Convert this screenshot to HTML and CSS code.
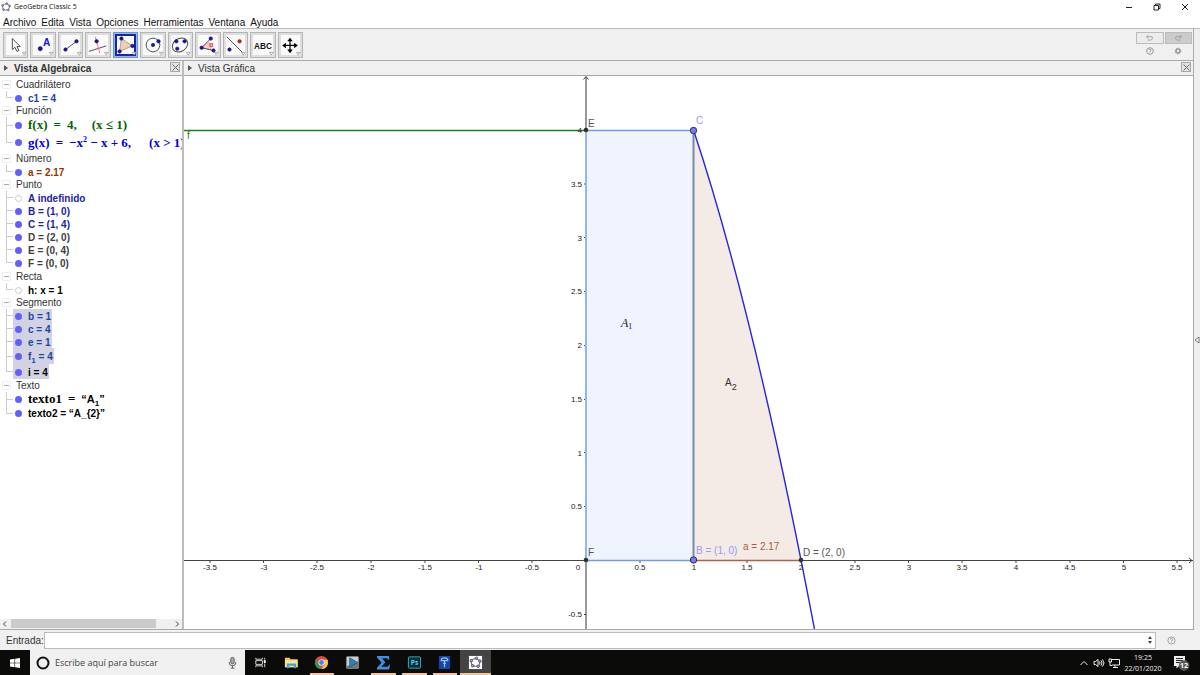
FILE: index.html
```html
<!DOCTYPE html>
<html lang="es">
<head>
<meta charset="utf-8">
<title>GeoGebra Classic 5</title>
<link rel="stylesheet" href="styles.css">
</head>
<body>
<header class="titlebar">
  <svg class="app-logo" viewBox="0 0 12 12"><ellipse cx="6" cy="6" rx="4.2" ry="3.8" fill="none" stroke="#666" stroke-width="1"/><g fill="#99f" stroke="#444" stroke-width=".6"><circle cx="6.8" cy="1.8" r="1.1"/><circle cx="10.4" cy="4.6" r="1.1"/><circle cx="8.8" cy="9.6" r="1.1"/><circle cx="3" cy="9.2" r="1.1"/><circle cx="1.8" cy="4.2" r="1.1"/></g></svg>
  <h1 class="app-title">GeoGebra Classic 5</h1>
  <div class="window-buttons">
    <button aria-label="Minimizar"><svg viewBox="0 0 10 10"><path d="M2 5.500h6"/></svg></button>
    <button aria-label="Restaurar"><svg viewBox="0 0 10 10"><path d="M2 3.5h4.5V8H2zM3.5 3.500V2H8v4.500H6.500"/></svg></button>
    <button aria-label="Cerrar"><svg viewBox="0 0 10 10"><path d="M2 2l6 6M8 2L2 8"/></svg></button>
  </div>
</header>
<nav class="menubar">
  <button>Archivo</button><button>Edita</button><button>Vista</button><button>Opciones</button><button>Herramientas</button><button>Ventana</button><button>Ayuda</button>
</nav>
<div class="workspace">
<div class="app">
  <div class="toolbar">
    <div class="tools">
      <button class="tool" aria-label="Elige y mueve"><svg viewBox="0 0 24 24"><path class="thin" fill="#fff" d="M8 5v12l2.800-2.500 2.200 4.500 2.200-1-2.200-4.300h3.700z"/><path class="more" d="M19 20h4l-2 3z"/></svg></button>
      <button class="tool" aria-label="Punto"><svg viewBox="0 0 24 24"><circle class="pt" cx="9" cy="16" r="2.300"/><text class="pt-name" x="12" y="13">A</text><path class="more" d="M19 20h4l-2 3z"/></svg></button>
      <button class="tool" aria-label="Segmento"><svg viewBox="0 0 24 24"><path class="thin" d="M6 17L18 8"/><circle class="pt" cx="6" cy="17" r="1.900"/><circle class="pt" cx="18" cy="8" r="1.900"/><path class="more" d="M19 20h4l-2 3z"/></svg></button>
      <button class="tool" aria-label="Perpendicular"><svg viewBox="0 0 24 24"><path class="thin" d="M2 19l19-6"/><path stroke="#f66" fill="none" d="M9 3l5 18"/><circle class="pt" cx="10.500" cy="8" r="1.900"/><path class="more" d="M19 20h4l-2 3z"/></svg></button>
      <button class="tool active" aria-label="Polígono"><svg viewBox="0 0 24 24"><path fill="#eccdb6" stroke="#a88872" stroke-width=".8" d="M7 5L19 13 5 19z"/><circle class="pt" cx="7" cy="5" r="1.900"/><circle class="pt" cx="19" cy="13" r="1.900"/><circle class="pt" cx="5" cy="19" r="1.900"/><path class="more" d="M19 20h4l-2 3z"/></svg></button>
      <button class="tool" aria-label="Circunferencia"><svg viewBox="0 0 24 24"><circle class="thin" cx="12" cy="12" r="7.500"/><circle class="pt" cx="12" cy="12" r="1.900"/><circle class="pt" cx="18" cy="8" r="1.900"/><path class="more" d="M19 20h4l-2 3z"/></svg></button>
      <button class="tool" aria-label="Elipse"><svg viewBox="0 0 24 24"><ellipse class="thin" cx="12" cy="12" rx="9" ry="7" transform="rotate(-35 12 12)"/><circle class="pt" cx="8" cy="8" r="1.900"/><circle class="pt" cx="17" cy="8" r="1.900"/><circle class="pt" cx="9" cy="16" r="1.900"/><path class="more" d="M19 20h4l-2 3z"/></svg></button>
      <button class="tool" aria-label="Ángulo"><svg viewBox="0 0 24 24"><path fill="#fcc" stroke="#f88" stroke-width=".8" d="M5 15l8-6q4 4 2 8z"/><path class="thin" d="M15 5L5 15l13 3"/><text class="alpha" x="13" y="14">α</text><circle class="pt" cx="15" cy="5" r="1.900"/><circle class="pt" cx="5" cy="15" r="1.900"/><circle class="pt" cx="18" cy="18" r="1.900"/><path class="more" d="M19 20h4l-2 3z"/></svg></button>
      <button class="tool" aria-label="Simetría"><svg viewBox="0 0 24 24"><path class="thin" d="M3 3l18 18"/><circle class="pt" cx="6" cy="17" r="1.900"/><circle class="pt-red" cx="17" cy="8" r="1.900"/><path class="more" d="M19 20h4l-2 3z"/></svg></button>
      <button class="tool" aria-label="Texto"><svg viewBox="0 0 24 24"><text class="abc" x="12" y="16" text-anchor="middle">ABC</text><path class="more" d="M19 20h4l-2 3z"/></svg></button>
      <button class="tool" aria-label="Desplaza vista gráfica"><svg viewBox="0 0 24 24"><path stroke="#000" stroke-width="1.300" d="M12 6v13M6 12.500h13"/><path d="M12 4l3 4H9zM12 21l3-4H9zM3.500 12.500l4-3v6zM20.500 12.500l-4-3v6z"/><path class="more" d="M19 20h4l-2 3z"/></svg></button>
    </div>
    <div class="history">
      <button class="undo" aria-label="Deshace"><svg viewBox="0 0 12 10"><path d="M4 1.500L2 3.500l2 2M2 3.500h6.500q1.500 2-1 4H3"/></svg></button>
      <button class="undo redo" aria-label="Rehace"><svg viewBox="0 0 12 10"><path d="M8 1.500l2 2-2 2M10 3.500H3.500q-1.500 2 1 4H9"/></svg></button>
      <button aria-label="Ayuda"><svg viewBox="0 0 10 10"><circle cx="5" cy="5" r="3.300"/><path d="M4 4q0-1 1-1t1 1-1 1v1M5 7v.5"/></svg></button>
      <button aria-label="Ajustes"><svg viewBox="0 0 10 10"><circle cx="5" cy="5" r="2" stroke-width="1.600"/><circle cx="5" cy="5" r="3" stroke-dasharray="1 1.350"/></svg></button>
    </div>
  </div>
  <div class="views">
    <section class="algebra">
      <div class="view-head"><svg class="caret" viewBox="0 0 6 8"><path d="M1 1l4 3-4 3z"/></svg><h2>Vista Algebraica</h2><button class="close" aria-label="Cerrar vista"><svg viewBox="0 0 9 9"><path d="M1.500 1.500l6 6M7.500 1.500l-6 6"/></svg></button></div>
      <div class="tree">
        <h3><button aria-label="Contraer"></button>Cuadrilátero</h3>
        <ul><li class="blue"><div><i class="dot"></i>c1 = 4</div></li></ul>
        <h3><button aria-label="Contraer"></button>Función</h3>
        <ul>
          <li class="green math f-row"><div><i class="dot"></i><span>f(x)</span><span>=</span><span>4,</span><span class="domain">(x ≤ 1)</span></div></li>
          <li class="pure math g-row"><div><i class="dot"></i><span>g(x)</span><span>=</span><span>−x<sup>2</sup> − x + 6,</span><span class="domain">(x &gt; 1)</span></div></li>
        </ul>
        <h3><button aria-label="Contraer"></button>Número</h3>
        <ul><li class="brown"><div><i class="dot"></i>a = 2.17</div></li></ul>
        <h3><button aria-label="Contraer"></button>Punto</h3>
        <ul class="points">
          <li class="navy"><div><i class="dot off"></i>A indefinido</div></li>
          <li class="navy"><div><i class="dot"></i>B = (1, 0)</div></li>
          <li class="navy"><div><i class="dot"></i>C = (1, 4)</div></li>
          <li class="gray"><div><i class="dot"></i>D = (2, 0)</div></li>
          <li class="gray"><div><i class="dot"></i>E = (0, 4)</div></li>
          <li class="gray"><div><i class="dot"></i>F = (0, 0)</div></li>
        </ul>
        <h3><button aria-label="Contraer"></button>Recta</h3>
        <ul><li><div><i class="dot off"></i>h: x = 1</div></li></ul>
        <h3><button aria-label="Contraer"></button>Segmento</h3>
        <ul class="selected">
          <li class="blue"><div><i class="dot"></i>b = 1</div></li>
          <li class="blue"><div><i class="dot"></i>c = 4</div></li>
          <li class="blue"><div><i class="dot"></i>e = 1</div></li>
          <li class="blue sub-row"><div><i class="dot"></i><span>f<sub>1</sub> = 4</span></div></li>
          <li class="i-row"><div><i class="dot"></i>i = 4</div></li>
        </ul>
        <h3><button aria-label="Contraer"></button>Texto</h3>
        <ul class="texts">
          <li class="math"><div><i class="dot"></i><span>texto1</span><span>=</span><span class="quoted">“A<sub>1</sub>”</span></div></li>
          <li><div><i class="dot"></i>texto2 = “A_{2}”</div></li>
        </ul>
      </div>
      <div class="scrollbar"><svg viewBox="0 0 10 10"><path d="M6 2.500L3.500 5 6 7.500"/></svg><div class="track"><div class="thumb"></div></div><svg viewBox="0 0 10 10"><path d="M4 2.500L6.500 5 4 7.500"/></svg></div>
    </section>
    <section class="graphics">
      <div class="view-head"><svg class="caret" viewBox="0 0 6 8"><path d="M1 1l4 3-4 3z"/></svg><h2>Vista Gráfica</h2><button class="close" aria-label="Cerrar vista"><svg viewBox="0 0 9 9"><path d="M1.500 1.500l6 6M7.500 1.500l-6 6"/></svg></button></div>
      <div class="plot">
      <svg width="100%" height="100%">
        <rect x="402" y="54" width="107.500" height="430" fill="#eff4ff"/>
        <path fill="#f4eae6" d="M509.500 484V54Q563.250 215.250 617 484z"/>
        <g class="axes">
          <line x1="0" y1="484.500" x2="100%" y2="484.500"/>
          <line x1="402" y1="1" x2="402" y2="100%" stroke="#777" stroke-width="1.500"/>
          <path d="M399.500 3.500L402 .5l2.500 3"/>
          <path d="M26 484v3M79.500 484v3M133 484v3M187 484v3M241 484v3M294.500 484v3M348 484v3M456 484v3M509.500 484v3M563 484v3M617 484v3M671 484v3M724.500 484v3M778 484v3M832 484v3M886 484v3M939.500 484v3M993 484v3M400 108h2M400 161.500h2M400 215.500h2M400 269.500h2M400 323.500h2M400 376.500h2M400 430.500h2M400 538.500h2"/>
          <svg x="100%" y="480" overflow="visible"><path d="M-4 2l3 2.500-3 2.500"/></svg>
        </g>
        <path stroke="#1c821c" stroke-width="1.500" d="M0 54.500h402"/>
        <g stroke="#8fb7f3" stroke-width="2"><path d="M402 54v430"/><path stroke="#6f9ce4" stroke-width="1.500" d="M402 54.500h107.500M402 484.500h107.500"/></g>
        <path stroke="#7589aa" stroke-width="2" d="M509.500 54v430"/>
        <path stroke="#af6149" stroke-width="1.500" d="M509.500 484.500H617"/>
        <path stroke="#2626dd" stroke-width="1.400" fill="none" d="M509.500 54Q574 247.500 638.500 595.800"/>
        <g class="ticks" text-anchor="middle">
          <text x="26" y="494">-3.5</text><text x="80" y="494">-3</text><text x="133" y="494">-2.5</text><text x="187" y="494">-2</text><text x="241" y="494">-1.5</text><text x="295" y="494">-1</text><text x="348" y="494">-0.5</text><text x="394" y="494">0</text><text x="456" y="494">0.5</text><text x="510" y="494">1</text><text x="563" y="494">1.5</text><text x="617" y="494">2</text><text x="671" y="494">2.5</text><text x="725" y="494">3</text><text x="778" y="494">3.5</text><text x="832" y="494">4</text><text x="886" y="494">4.5</text><text x="940" y="494">5</text><text x="993" y="494">5.5</text>
        </g>
        <g class="ticks" text-anchor="end">
          <text x="398" y="57">4</text><text x="398" y="111">3.5</text><text x="398" y="165">3</text><text x="398" y="218">2.5</text><text x="398" y="272">2</text><text x="398" y="326">1.5</text><text x="398" y="380">1</text><text x="398" y="433">0.5</text><text x="398" y="541">-0.5</text>
        </g>
        <g fill="#333"><circle cx="402" cy="54" r="2.300"/><circle cx="402" cy="484" r="2.300"/><circle cx="617" cy="484" r="2.300"/></g>
        <g fill="#7777ff" stroke="#333" stroke-width="1"><circle cx="509.500" cy="54.500" r="3.200"/><circle cx="509.500" cy="484" r="3.200"/></g>
        <g class="names">
          <text x="3" y="63" fill="#1c821c">f</text>
          <text x="404" y="51">E</text><text x="404" y="480">F</text>
          <text x="512" y="48" fill="#9999f8">C</text>
          <text x="512" y="478" fill="#9999f8">B = (1, 0)</text>
          <text x="559" y="474" fill="#b2593a">a = 2.17</text>
          <text x="619" y="480">D = (2, 0)</text>
          <text x="541" y="310" fill="#333">A<tspan dy="4" class="subscript">2</tspan></text>
          <text x="437" y="251" class="latex">A<tspan dy="2" class="latex-sub">1</tspan></text>
        </g>
      </svg>
      </div>
    </section>
  </div>
</div>
<aside class="side"><button aria-label="Mostrar panel lateral"><svg viewBox="0 0 6 10"><path d="M5 2v6L1 5z"/></svg></button></aside>
</div>
<form class="entry"><label for="entrada">Entrada:</label><div class="entry-box"><input id="entrada" type="text"><svg viewBox="0 0 6 10"><path d="M3 1l2 3H1zM3 9l2-3H1z"/></svg></div><button type="button" aria-label="Ayuda de entrada"><svg viewBox="0 0 10 10"><circle cx="5" cy="5" r="4"/><path d="M3.700 4q0-1.500 1.300-1.500T6.300 4 5 5.300V6M5 7v.700"/></svg></button></form>
<footer class="taskbar">
  <button class="start" aria-label="Inicio"><svg viewBox="0 0 12 12"><path fill="#fff" d="M1 2.500l4.500-.7v3.900H1zM6.100 1.700L11 1v4.700H6.100zM1 6.300h4.500v3.900L1 9.500zM6.100 6.300H11V11l-4.900-.7z"/></svg></button>
  <div class="search"><svg viewBox="0 0 14 14"><circle cx="7" cy="7" r="5.500" fill="none" stroke="#111" stroke-width="2"/></svg><input type="text" aria-label="Buscar" placeholder="Escribe aquí para buscar"><svg class="mic" viewBox="0 0 14 14"><rect x="5.200" y="1.500" width="3.600" height="7" rx="1.800"/><path d="M3.500 6.500v1q0 3 3.500 3t3.500-3v-1M7 10.500V13M5 13h4" fill="none"/></svg></div>
  <div class="apps">
    <button aria-label="Vista de tareas"><svg viewBox="0 0 16 16"><path fill="none" stroke="#ddd" d="M3 3v1.500h7V3M3 6h7v4H3zM3 13v-1.500h7V13M12.500 3v2M12.500 9v4"/><path fill="#fff" d="M11.500 5.500h2v3h-2z"/></svg></button>
    <button aria-label="Explorador"><svg viewBox="0 0 16 16"><path fill="#f5c944" d="M1 3h5l1 1.500h7.500V13H1z"/><path fill="#ffe591" d="M1 5.500h13.500V13H1z"/><path fill="#3aa4dd" d="M3 9h10v5h-2.500v-2.500h-5V14H3z"/></svg></button>
    <button class="open" aria-label="Chrome"><svg viewBox="0 0 16 16"><circle cx="8" cy="8" r="7" fill="#dd4b3e"/><path fill="#25a05b" d="M1.900 4.500L5 10l3 5A7 7 0 0 1 1.900 4.500z"/><path fill="#fbc83d" d="M8 5h6.300A7 7 0 0 1 8 15l3-5z"/><circle cx="8" cy="8" r="3.300" fill="#fff"/><circle cx="8" cy="8" r="2.600" fill="#4285f4"/></svg></button>
    <button aria-label="Reproductor"><svg viewBox="0 0 16 16"><rect x="1" y="1" width="14" height="14" rx="2" fill="#777"/><path fill="#ccc" d="M2 2h12v5L2 12z"/><path fill="#2385b9" stroke="#175273" stroke-width=".7" d="M5 3l8.500 5L5 13z"/></svg></button>
    <button class="open" aria-label="Sumatorio"><svg viewBox="0 0 16 16"><path fill="#3992e4" d="M1 1h13v4h-1.200L12 3.500H6.500L10 8l-4.500 4.500h7l1.500-2H15L14 15.500H1v-2L6 8.300 1 2.500z"/></svg></button>
    <button class="open" aria-label="Photoshop"><svg viewBox="0 0 16 16"><rect x="1.500" y="2" width="13" height="12" rx="1" fill="#082936" stroke="#28b9cd"/><text x="8" y="11" text-anchor="middle" class="ps">Ps</text></svg></button>
    <button class="open" aria-label="Aplicación"><svg viewBox="0 0 16 16"><rect x="2" y="1" width="12" height="14" fill="#1745a5"/><path fill="none" stroke="#8fc0ff" stroke-width="1.300" d="M4.500 6q0-3 3.500-3t3.500 3zM8 6v7M6.500 9h3"/></svg></button>
    <button class="open current" aria-label="GeoGebra"><svg viewBox="0 0 16 16"><rect x="1" y="1" width="14" height="14" fill="#fff"/><ellipse cx="8" cy="8" rx="4.500" ry="4" fill="none" stroke="#555"/><g fill="#99f" stroke="#333" stroke-width=".7"><circle cx="9" cy="3.500" r="1.400"/><circle cx="12.700" cy="6.500" r="1.400"/><circle cx="11" cy="12" r="1.400"/><circle cx="5" cy="11.500" r="1.400"/><circle cx="3.500" cy="6" r="1.400"/></g></svg></button>
  </div>
  <div class="tray">
    <svg viewBox="0 0 12 12"><path d="M2.500 8L6 4.500 9.500 8"/></svg>
    <svg viewBox="0 0 12 12"><path d="M1 4.500h1.500L5 2.500v7l-2.500-2H1zM6.500 4.500q1 1.500 0 3M8 3.500q2 2.500 0 5M9.500 2.500q3 3.500 0 7"/></svg>
    <svg viewBox="0 0 12 12"><path d="M4 2.500h7.500v5.500H4M7 8v2M5 10.500h5M1 2h2.500v3H1zM2 5v3.500h2"/></svg>
    <div class="clock"><time>19:25</time><time>22/01/2020</time></div>
    <svg class="notice" viewBox="0 0 18 16"><path fill="#eee" stroke="none" d="M2 1h11v10H7l-2.500 2.500V11H2z"/><path stroke="#222" d="M4 3.500h7M4 5.500h7M4 7.500h7"/><circle cx="12" cy="10.500" r="5" fill="#555" stroke="#777" stroke-width=".5"/><text x="12" y="13" text-anchor="middle">12</text></svg>
  </div>
</footer>
</body>
</html>
```
FILE: styles.css
```css
* { box-sizing: border-box; }
body {
  margin: 0;
  height: 100vh;
  display: flex;
  flex-direction: column;
  overflow: hidden;
  background: #fff;
  color: #333;
  font: 10px/13px "Liberation Sans", Arial, sans-serif;
}
button { padding: 0; border: 0; background: none; font: inherit; color: inherit; display: flex; align-items: center; justify-content: center; }
input { font: inherit; border: 0; outline: 0; background: none; min-width: 0; flex: 1; padding: 0; }
h1, h2, h3, ul { margin: 0; padding: 0; font: inherit; list-style: none; }
svg { display: block; flex: none; }

.titlebar { height: 14px; flex: none; display: flex; align-items: center; padding-left: 1px; gap: 3px; }
.app-logo { width: 10px; height: 10px; }
.app-title { flex: 1; font: 7px/12px "Open Sans", sans-serif; color: #111; }
.window-buttons { display: flex; padding-right: 10px; gap: 18px; }
.window-buttons svg { width: 10px; height: 10px; fill: none; stroke: #222; }

.menubar { height: 14px; flex: none; display: flex; gap: 5px; padding: 2px 3px 0; color: #111; }

.workspace { flex: 1; min-height: 0; display: flex; }
.app { flex: 1; min-width: 0; display: flex; flex-direction: column; background: #f0f0f0; border-top: 1px solid #bbb; border-right: 1px solid #aaa; }
.side { width: 6px; display: flex; align-items: center; background: #efefef; border-top: 1px solid #bbb; }
.side button { padding-top: 20px; }
.side svg { width: 6px; height: 10px; fill: #fff; stroke: #777; }

.toolbar { height: 31px; flex: none; display: flex; justify-content: space-between; padding: 3px 1px 2px 3px; }
.tools { width: 300px; display: grid; grid-template-columns: repeat(11, 1fr); gap: 2px; }
.tool { background: #fafafa; border: 1px solid #b5b5b5; box-shadow: inset 0 0 0 2px #dedede; }
.tool svg { width: 22px; height: 22px; }
.tool.active { border-color: #5f9bd4; box-shadow: inset 0 0 0 1px #8fbce6, inset 0 0 0 3px #2020a8; }
.thin { stroke: #444; stroke-width: 1; fill: none; }
.pt { fill: #1515b0; stroke: #111155; stroke-width: .6; }
.pt-red { fill: #d22; stroke: #611; stroke-width: .6; }
.more { fill: #fff; stroke: #888; stroke-width: .7; }
.pt-name { font: bold 11px "Liberation Sans", sans-serif; fill: #11f; }
.alpha { font: bold 8px "Liberation Sans", sans-serif; fill: #e44; }
.abc { font: bold 9px "Liberation Sans", sans-serif; fill: #111; }
.history { width: 56px; display: grid; grid-template: 12px 12px / 1fr 1fr; gap: 1px; }
.history svg { width: 10px; height: 10px; fill: none; stroke: #999; }
.history .undo { border: 1px solid #bbb; background: #ececec; }
.history .redo { background: #ccc; }

.views { flex: 1; min-height: 0; display: flex; border-top: 1px solid #aaa; border-bottom: 1px solid #aaa; }
.algebra { width: 185px; display: flex; flex-direction: column; border-right: 2px solid #bdbdbd; background: #fff; margin-right: -1px; }
.graphics { flex: 1; min-width: 0; display: flex; flex-direction: column; background: #fff; }
.algebra { margin-right: 0; width: 184px; }
.view-head { height: 15px; flex: none; display: flex; align-items: center; gap: 5px; padding: 0 2px 0 3px; background: #f0f0f0; border-bottom: 1px solid #aaa; }
.view-head h2 { flex: 1; }
.algebra h2 { font-weight: bold; }
.caret { width: 6px; height: 8px; fill: #555; }
.close { width: 10px; height: 10px; border: 1px solid #aaa; background: #e4e4e4; align-self: flex-start; margin-top: 1px; }
.close svg { width: 9px; height: 9px; stroke: #666; fill: none; }

.tree { flex: 1; min-height: 0; overflow: hidden; padding-top: 2px; }
.tree h3 { display: flex; align-items: center; height: 13px; gap: 5px; padding-left: 2px; }
.tree h3 button { width: 9px; height: 9px; border: 1px solid #eee; border-radius: 1px; }
.tree h3 button::before { content: ""; width: 5px; height: 1px; background: #aaa; }
.tree li {
  height: 13px;
  padding-left: 13px;
  color: #000;
  font-weight: bold;
  white-space: nowrap;
  background: linear-gradient(#ccc, #ccc) 6px 0 / 1px 100% no-repeat, linear-gradient(#ccc, #ccc) 6px 50% / 7px 1px no-repeat;
}
.tree li:last-child { background-size: 1px 50%, 7px 1px; }
.tree li div { display: flex; align-items: center; height: 100%; width: max-content; padding: 1px 1px 0 2px; }
.dot { flex: none; width: 7px; height: 7px; border-radius: 50%; background: #6060ff; margin-right: 6px; }
.dot.off { background: #fff; border: 1px solid #ccc; }
.tree .blue { color: #1846a6; }
.tree .green { color: #006400; }
.tree .pure { color: #0000e6; }
.tree .brown { color: #993300; }
.tree .navy { color: #2222a2; }
.tree .gray { color: #404040; }
.tree .math { font: bold 13px/14px "Liberation Serif", serif; }
.tree .math div { gap: 6px; padding-top: 0; }
.tree .math .dot { margin-right: 0; }
.tree .math .domain { padding-left: 9px; }
.tree .f-row { height: 16px; }
.tree .g-row { height: 19px; }
.tree .g-row .domain { padding-left: 12px; }
.tree sup, .tree sub { font-size: 8px; line-height: 0; }
.points { padding-bottom: 1px; }
.selected div { background: #d2d2e2; }
.tree .sub-row { height: 16px; }
.tree .i-row { height: 15px; }
.tree .texts li { height: 14px; }
.texts .quoted { font-family: "Liberation Sans", sans-serif; font-size: 11px; }
.scrollbar { height: 10px; flex: none; display: flex; background: #f0f0f0; }
.scrollbar svg { width: 10px; height: 10px; stroke: #444; fill: none; }
.track { flex: 1; padding-left: 1px; }
.thumb { width: 90%; height: 9px; background: #cbcbcb; }

.plot { flex: 1; min-height: 0; overflow: hidden; }
.axes { stroke: #444; stroke-width: 1; fill: none; }
.ticks { font-size: 8px; fill: #222; }
.names { font-size: 10px; fill: #555; }
.names .subscript { font-size: 9px; }
.names .latex { font: italic 12px "Liberation Serif", serif; fill: #222; }
.names .latex-sub { font: 8px "Liberation Serif", serif; }

.entry { height: 20px; flex: none; display: flex; align-items: center; background: #f0f0f0; padding: 1px 0 1px 6px; font-size: 10px; }
.entry label { width: 38px; }
.entry-box { flex: 1; height: 17px; display: flex; align-items: center; background: #fff; border: 1px solid #bbb; padding: 0 2px; }
.entry-box svg { width: 6px; height: 10px; fill: #444; }
.entry button { width: 30px; margin-right: 14px; }
.entry button svg { width: 9px; height: 9px; fill: none; stroke: #999; }

.taskbar { height: 25px; flex: none; display: flex; background: #0b0b0a; color: #eee; }
.start { width: 30px; }
.start svg { width: 12px; height: 12px; }
.search { width: 215px; display: flex; align-items: center; gap: 5px; padding: 0 6px; background: #f0f0f0; color: #333; font: 9px "Open Sans", sans-serif; }
.search svg { width: 14px; height: 14px; }
.search .mic { width: 13px; height: 13px; fill: #aaa; stroke: #555; }
.search input::placeholder { color: #444; opacity: 1; }
.apps { width: 246px; display: grid; grid-template-columns: repeat(8, 1fr); }
.apps button { border-bottom: 2px solid transparent; border-top: 1px solid transparent; }
.apps svg { width: 15px; height: 15px; }
.apps .open { border-bottom-color: #eec69b; margin: 0 3px; }
.apps .current { background: #444; border-top-color: #444; margin: 0; }
.ps { font: bold 7px "Open Sans", sans-serif; fill: #4bdcf5; }
.tray { margin-left: auto; display: flex; align-items: center; gap: 3px; padding-right: 10px; }
.tray svg { width: 12px; height: 12px; fill: none; stroke: #eee; }
.tray .clock { display: flex; flex-direction: column; align-items: center; width: 40px; font: 7px/11px "Open Sans", sans-serif; }
.tray .notice { width: 18px; height: 16px; margin-left: 6px; }
.notice text { font: bold 7px "Open Sans", sans-serif; fill: #fff; stroke: none; }
```
